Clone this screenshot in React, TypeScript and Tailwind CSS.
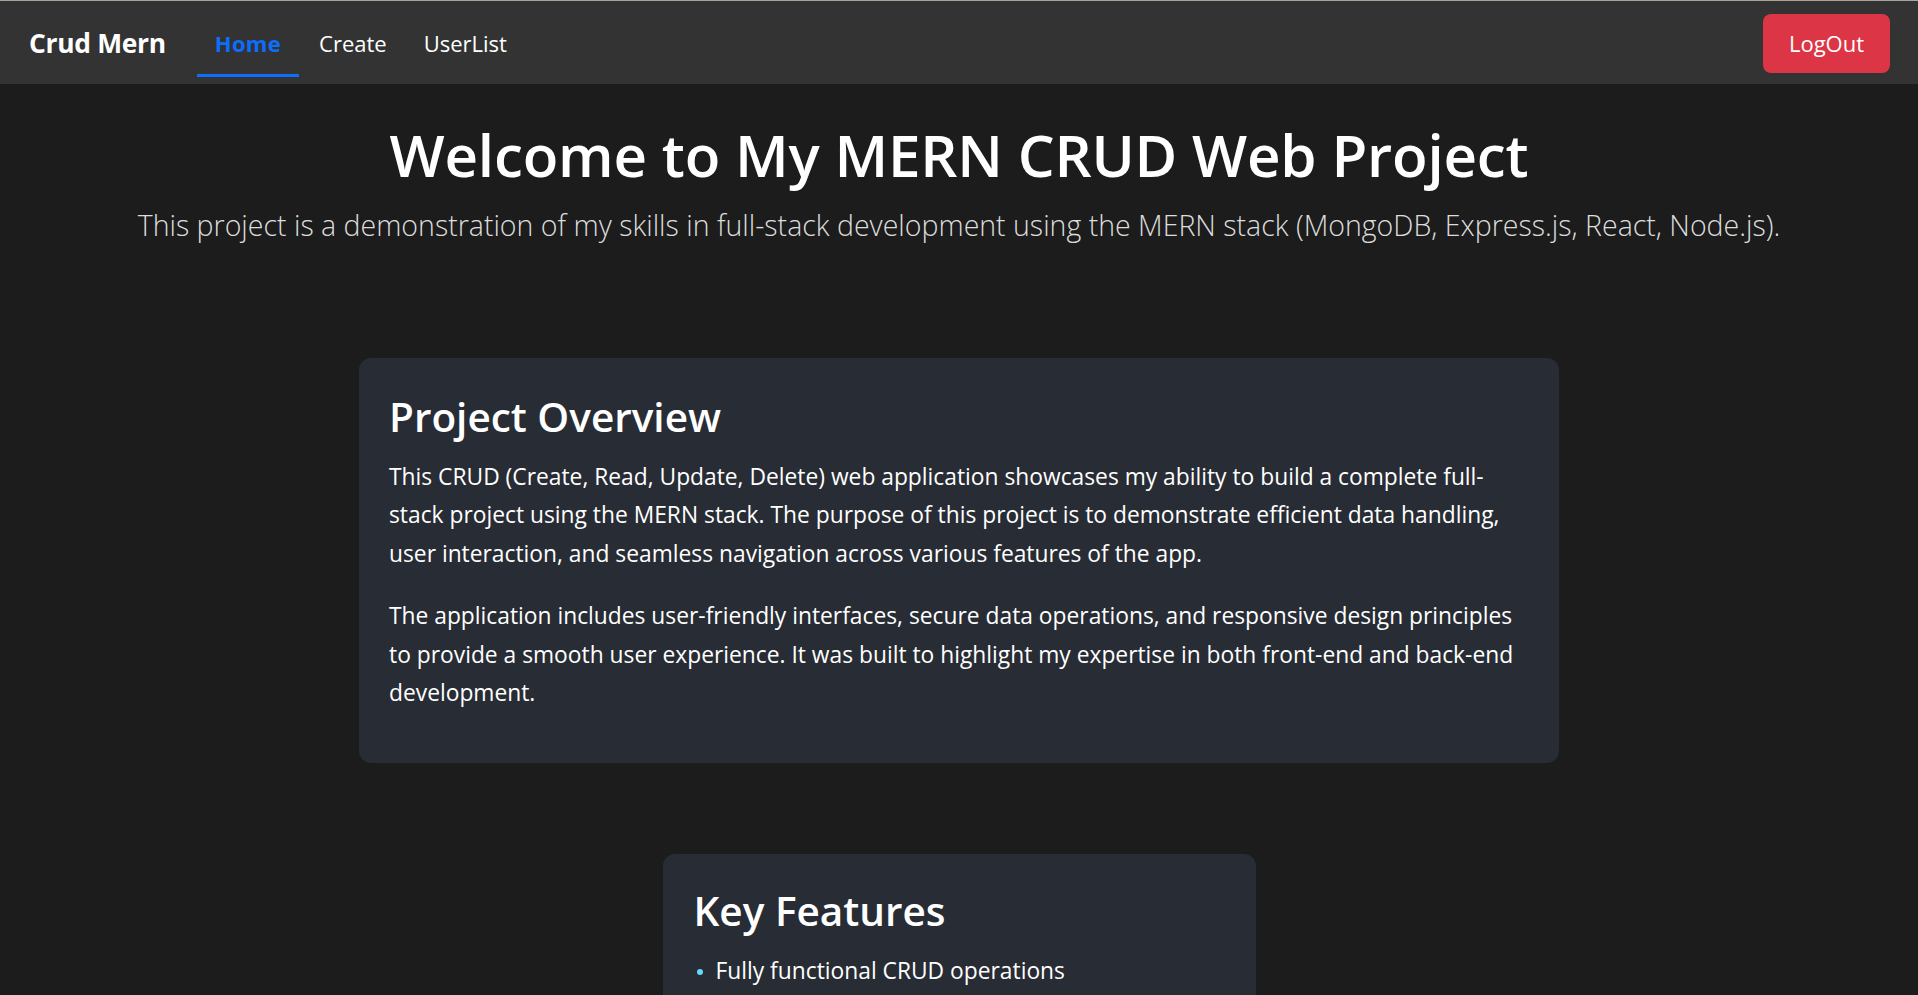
const features = ["Fully functional CRUD operations"];

const App = () => {
  return (
    <div
      className="min-h-screen bg-[#1c1c1c] text-white"
      style={{ fontFamily: '"Open Sans", "Noto Sans", sans-serif' }}
    >
      {/* Navbar */}
      <nav className="flex h-[84px] items-center border-t border-[#aaa49a] bg-[#333333] pl-[29px] pr-[28px]">
        <span className="mt-[1px] text-[26.4px] font-bold leading-none tracking-[-0.3px] text-white">
          Crud Mern
        </span>
        <div className="ml-[31px] flex h-full">
          <a className="mt-auto mb-[7px] flex h-[63px] items-center border-b-[3px] border-[#0d6efd] px-[18px] pb-[2px] text-[22px] font-bold tracking-[0.3px] text-[#0d6efd]">
            Home
          </a>
          <a className="mt-auto mb-[7px] ml-[3px] flex h-[63px] items-center border-b-[3px] border-transparent px-[17px] pb-[2px] text-[22px] text-white">
            Create
          </a>
          <a className="mt-auto mb-[7px] ml-[3px] flex h-[63px] items-center border-b-[3px] border-transparent px-[17px] pb-[2px] text-[22px] text-white">
            UserList
          </a>
        </div>
        <button className="ml-auto mt-[1px] flex h-[59px] w-[127px] items-center justify-center rounded-[8px] bg-[#dc3545] text-[22px] text-white">
          LogOut
        </button>
      </nav>

      {/* Hero */}
      <header className="pt-[35px] text-center">
        <h1 className="text-[58.3px] font-semibold leading-[72px] tracking-[-0.2px]">
          Welcome to My MERN CRUD Web Project
        </h1>
        <p className="mt-[16px] text-[28.5px] font-light leading-[36px] text-[#dddddd]">
          This project is a demonstration of my skills in full-stack development using the MERN stack (MongoDB, Express.js, React, Node.js).
        </p>
      </header>

      {/* Overview card */}
      <section className="mx-auto mt-[115px] w-[1200px] rounded-[12px] bg-[#282c34] px-[30px] pt-[30px] pb-[27px]">
        <h2 className="mb-[12px] text-[40.5px] font-semibold leading-[58px]">Project Overview</h2>
        <p className="-mr-[20px] mb-[24px] text-[22.8px] leading-[38.4px]">
          This CRUD (Create, Read, Update, Delete) web application showcases my ability to build a complete full-
          <br />
          stack project using the MERN stack. The purpose of this project is to demonstrate efficient data handling,
          <br />
          user interaction, and seamless navigation across various features of the app.
        </p>
        <p className="-mr-[20px] mb-[24px] text-[22.8px] leading-[38.4px]">
          The application includes user-friendly interfaces, secure data operations, and responsive design principles
          <br />
          to provide a smooth user experience. It was built to highlight my expertise in both front-end and back-end
          <br />
          development.
        </p>
      </section>

      {/* Features card */}
      <section className="mx-auto mt-[91px] mb-[60px] w-[593px] rounded-[12px] bg-[#282c34] px-[31px] pt-[28px] pb-[28px]">
        <h2 className="mb-[12px] text-[40.5px] font-semibold leading-[58px]">Key Features</h2>
        <ul className="flex flex-col">
          {features.map((f) => (
            <li key={f} className="flex items-center text-[22.8px] leading-[38.4px]">
              <span className="ml-[3px] mr-[13px] h-[6px] w-[6px] shrink-0 rounded-full bg-[#61dafb]" />
              {f}
            </li>
          ))}
        </ul>
      </section>
    </div>
  );
};

export default App;
